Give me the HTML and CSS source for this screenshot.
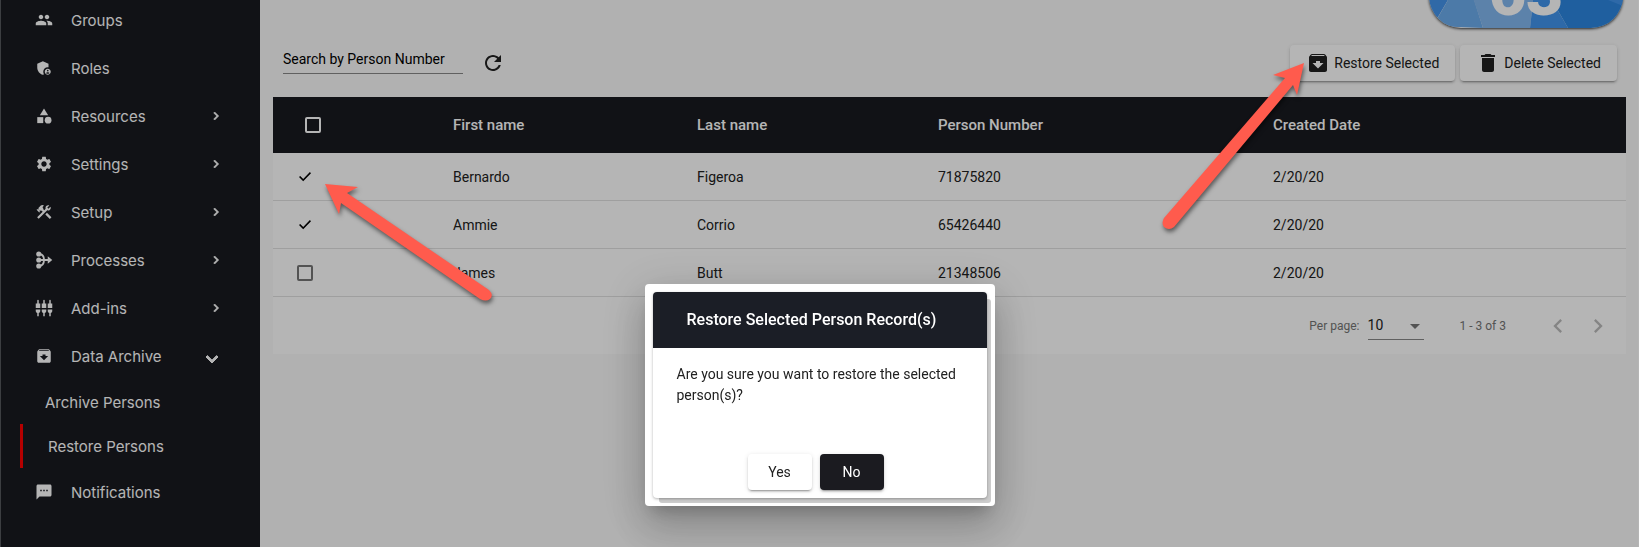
FILE: index.html
```html
<!DOCTYPE html>
<html lang="en">
<head>
    <meta charset="UTF-8">
    <meta name="viewport" content="width=device-width, initial-scale=1.0">
    <title>Restore Persons</title>
    <link rel="stylesheet" href="styles.css">
</head>
<body>
    <div class="layout">
        <!-- sidebar -->
        <nav class="sidebar">
            <ul class="menu">
                <li><a href="#groups" class="item">
                    <svg class="icon" viewBox="0 0 24 24"><path d="M16 11c1.660 0 2.990-1.340 2.990-3S17.660 5 16 5s-3 1.340-3 3 1.340 3 3 3zm-8 0c1.660 0 2.990-1.340 2.990-3S9.660 5 8 5 5 6.340 5 8s1.340 3 3 3zm0 2c-2.330 0-7 1.170-7 3.500V19h14v-2.500C15 14.170 10.330 13 8 13zm8 0c-.29 0-.62.02-.97.05 1.160.84 1.970 1.970 1.970 3.450V19h6v-2.500c0-2.330-4.670-3.500-7-3.500z"/></svg>
                    <span>Groups</span>
                </a></li>
                <li><a href="#roles" class="item">
                    <svg class="icon" viewBox="0 0 24 24"><path d="M17 11c.34 0 .67.04 1 .09V6.270L10.500 3 3 6.270v4.910c0 4.540 3.200 8.790 7.500 9.820.55-.13 1.080-.32 1.600-.55-.69-.98-1.100-2.170-1.100-3.450 0-3.310 2.690-6 6-6z"/><path d="M17 13c-2.210 0-4 1.790-4 4s1.790 4 4 4 4-1.790 4-4-1.790-4-4-4zm0 1.380c.62 0 1.120.51 1.120 1.120s-.51 1.120-1.120 1.120-1.120-.51-1.120-1.120.5-1.120 1.120-1.120zm0 5.370c-.93 0-1.740-.46-2.240-1.170.05-.72 1.510-1.080 2.240-1.080s2.190.36 2.240 1.080c-.5.71-1.310 1.170-2.240 1.170z"/></svg>
                    <span>Roles</span>
                </a></li>
                <li><a href="#resources" class="item">
                    <svg class="icon" viewBox="0 0 24 24"><path d="M12 2l-5.500 9h11z"/><circle cx="17.500" cy="17.500" r="4.500"/><path d="M3 13.500h8v8H3z"/></svg>
                    <span>Resources</span>
                    <svg class="chevron" viewBox="0 0 24 24"><path d="M10 6L8.590 7.410 13.170 12l-4.580 4.590L10 18l6-6z"/></svg>
                </a></li>
                <li><a href="#settings" class="item">
                    <svg class="icon" viewBox="0 0 24 24"><path d="M19.140 12.940c.04-.3.06-.61.06-.94 0-.32-.02-.64-.07-.94l2.030-1.580c.18-.14.23-.41.12-.61l-1.920-3.320c-.12-.22-.37-.29-.59-.22l-2.390.96c-.5-.38-1.030-.7-1.620-.94l-.36-2.540c-.04-.24-.24-.41-.48-.41h-3.840c-.24 0-.43.17-.47.41l-.36 2.540c-.59.24-1.130.57-1.620.94l-2.390-.96c-.22-.08-.47 0-.59.22L2.740 8.870c-.12.21-.08.47.12.61l2.030 1.580c-.05.3-.09.63-.09.94s.02.64.07.94l-2.030 1.580c-.18.14-.23.41-.12.61l1.920 3.320c.12.22.37.29.59.22l2.390-.96c.5.38 1.030.7 1.620.94l.36 2.540c.05.24.24.41.48.41h3.840c.24 0 .44-.17.47-.41l.36-2.540c.59-.24 1.130-.56 1.620-.94l2.390.96c.22.08.47 0 .59-.22l1.920-3.320c.12-.22.07-.47-.12-.61l-2.010-1.580zM12 15.600c-1.980 0-3.600-1.620-3.600-3.600s1.620-3.600 3.600-3.600 3.600 1.620 3.600 3.600-1.620 3.600-3.600 3.600z"/></svg>
                    <span>Settings</span>
                    <svg class="chevron" viewBox="0 0 24 24"><path d="M10 6L8.590 7.410 13.170 12l-4.580 4.590L10 18l6-6z"/></svg>
                </a></li>
                <li><a href="#setup" class="item">
                    <svg class="icon" viewBox="0 0 24 24"><path d="M13.783 15.172l2.121-2.121 5.996 5.996-2.121 2.121z"/><path d="M17.500 10c1.930 0 3.500-1.570 3.500-3.500 0-.58-.16-1.120-.41-1.600l-2.700 2.700-1.490-1.490 2.700-2.700c-.48-.25-1.020-.41-1.600-.41C15.570 3 14 4.570 14 6.500c0 .41.08.8.21 1.160l-1.850 1.850-1.780-1.780.71-.71-1.410-1.410L12 3.490c-1.170-1.170-3.070-1.170-4.240 0L4.220 7.030l1.410 1.410H2.810l-.71.71 3.540 3.540.71-.71V9.150l1.410 1.410.71-.71 1.780 1.780-7.410 7.410 2.120 2.120L16.340 9.790c.36.13.75.21 1.160.21z"/></svg>
                    <span>Setup</span>
                    <svg class="chevron" viewBox="0 0 24 24"><path d="M10 6L8.590 7.410 13.170 12l-4.580 4.590L10 18l6-6z"/></svg>
                </a></li>
                <li><a href="#processes" class="item">
                    <svg class="icon" viewBox="0 0 24 24"><circle cx="5" cy="4" r="3.400"/><circle cx="5" cy="12" r="3.400"/><circle cx="5" cy="20" r="3.400"/><path d="M5 4c5 0 7 4 7 8s-2 8-7 8M5 12h14" fill="none" stroke="currentColor" stroke-width="2.400"/><path d="M17 7l6 5-6 5z"/></svg>
                    <span>Processes</span>
                    <svg class="chevron" viewBox="0 0 24 24"><path d="M10 6L8.590 7.410 13.170 12l-4.580 4.590L10 18l6-6z"/></svg>
                </a></li>
                <li><a href="#addins" class="item">
                    <svg class="icon" viewBox="0 0 24 24"><path d="M5 2c0-.55-.45-1-1-1s-1 .45-1 1v4H1v6h6V6H5V2zm4 14c0 1.300.84 2.400 2 2.820V23h2v-4.180c1.160-.41 2-1.510 2-2.820v-2H9v2zm-8 0c0 1.300.84 2.400 2 2.820V23h2v-4.180C6.160 18.400 7 17.300 7 16v-2H1v2zM21 6V2c0-.55-.45-1-1-1s-1 .45-1 1v4h-2v6h6V6h-2zm-8-4c0-.55-.45-1-1-1s-1 .45-1 1v4H9v6h6V6h-2V2zm4 14c0 1.300.84 2.400 2 2.820V23h2v-4.180c1.160-.41 2-1.510 2-2.820v-2h-6v2z"/></svg>
                    <span>Add-ins</span>
                    <svg class="chevron" viewBox="0 0 24 24"><path d="M10 6L8.590 7.410 13.170 12l-4.580 4.590L10 18l6-6z"/></svg>
                </a></li>
                <li>
                    <a href="#archive" class="item open">
                        <svg class="icon" viewBox="0 0 24 24"><path d="M20.540 5.230l-1.390-1.680C18.880 3.210 18.470 3 18 3H6c-.47 0-.88.21-1.160.55L3.460 5.230C3.170 5.570 3 6.020 3 6.500V19c0 1.100.9 2 2 2h14c1.100 0 2-.9 2-2V6.500c0-.48-.17-.93-.46-1.270zM12 17.500L6.500 12H10v-2h4v2h3.500L12 17.500zM5.120 5l.81-1h12l.94 1H5.120z"/></svg>
                        <span>Data Archive</span>
                        <svg class="chevron" viewBox="0 0 24 24"><path d="M7.410 8.590L12 13.170l4.590-4.580L18 10l-6 6-6-6z"/></svg>
                    </a>
                    <ul class="submenu">
                        <li><a href="#archive-persons">Archive Persons</a></li>
                        <li><a href="#restore-persons" class="active">Restore Persons</a></li>
                    </ul>
                </li>
                <li><a href="#notifications" class="item">
                    <svg class="icon" viewBox="0 0 24 24"><path d="M20 2H4c-1.100 0-1.990.9-1.990 2L2 22l4-4h14c1.100 0 2-.9 2-2V4c0-1.100-.9-2-2-2zM9 11H7V9h2v2zm4 0h-2V9h2v2zm4 0h-2V9h2v2z"/></svg>
                    <span>Notifications</span>
                </a></li>
            </ul>
        </nav>

        <!-- content -->
        <main class="content">
            <header class="top">
                <div class="badge">
                    <svg class="facets" viewBox="0 0 194 64" preserveAspectRatio="none">
                        <path d="M0 0h40L9 53l-9 5z" fill="#4494ec"/>
                        <path d="M4 62L34 10l10 22 10 32z" fill="#6caced"/>
                        <path d="M36 10L60 0h48l-7 64H54z" fill="#82b7f0"/>
                        <path d="M108 0l20 45 11 19h-38z" fill="#4295ed"/>
                        <path d="M108 0h86v64h-55l-11-19z" fill="#2c86e1"/>
                        <path d="M194 42l-40-16V0h40z" fill="#4295ed"/>
                    </svg>
                    <span>63</span>
                </div>
            </header>

            <div class="toolbar">
                <input class="search" type="text" placeholder="Search by Person Number" aria-label="Search by Person Number">
                <button class="refresh" type="button" aria-label="Refresh">
                    <svg viewBox="0 0 24 24"><path d="M17.650 6.350C16.200 4.900 14.210 4 12 4c-4.420 0-7.990 3.580-7.990 8s3.570 8 7.990 8c3.730 0 6.840-2.550 7.730-6h-2.080c-.82 2.330-3.040 4-5.650 4-3.310 0-6-2.690-6-6s2.690-6 6-6c1.660 0 3.140.69 4.220 1.780L13 11h7V4l-2.350 2.350z"/></svg>
                </button>
                <div class="actions">
                    <button class="btn" type="button">
                        <svg viewBox="0 0 24 24"><path d="M20.540 5.230l-1.390-1.680C18.880 3.210 18.470 3 18 3H6c-.47 0-.88.21-1.160.55L3.460 5.230C3.170 5.570 3 6.020 3 6.500V19c0 1.100.9 2 2 2h14c1.100 0 2-.9 2-2V6.500c0-.48-.17-.93-.46-1.270zM12 17.500L6.500 12H10v-2h4v2h3.500L12 17.500zM5.120 5l.81-1h12l.94 1H5.120z"/></svg>
                        Restore Selected
                    </button>
                    <button class="btn" type="button">
                        <svg viewBox="0 0 24 24"><path d="M6 19c0 1.100.9 2 2 2h8c1.100 0 2-.9 2-2V7H6v12zM19 4h-3.500l-1-1h-5l-1 1H5v2h14V4z"/></svg>
                        Delete Selected
                    </button>
                </div>
            </div>

            <div class="card">
                <table>
                    <thead>
                        <tr>
                            <th class="check"><input type="checkbox" aria-label="Select all"></th>
                            <th class="first">First name</th>
                            <th class="last">Last name</th>
                            <th class="number">Person Number</th>
                            <th>Created Date</th>
                        </tr>
                    </thead>
                    <tbody>
                        <tr>
                            <td class="check"><input type="checkbox" aria-label="Bernardo Figeroa" checked></td>
                            <td>Bernardo</td>
                            <td>Figeroa</td>
                            <td>71875820</td>
                            <td>2/20/20</td>
                        </tr>
                        <tr>
                            <td class="check"><input type="checkbox" aria-label="Ammie Corrio" checked></td>
                            <td>Ammie</td>
                            <td>Corrio</td>
                            <td>65426440</td>
                            <td>2/20/20</td>
                        </tr>
                        <tr>
                            <td class="check"><input type="checkbox" aria-label="James Butt"></td>
                            <td>James</td>
                            <td>Butt</td>
                            <td>21348506</td>
                            <td>2/20/20</td>
                        </tr>
                    </tbody>
                </table>
                <div class="pager">
                    <label for="perPage">Per page:</label>
                    <div class="select">
                        <select id="perPage">
                            <option>10</option>
                            <option>25</option>
                            <option>50</option>
                        </select>
                    </div>
                    <span class="range">1 - 3 of 3</span>
                    <button type="button" aria-label="Previous page" disabled>
                        <svg viewBox="0 0 24 24"><path d="M15.410 7.410L14 6l-6 6 6 6 1.410-1.410L10.830 12z"/></svg>
                    </button>
                    <button type="button" aria-label="Next page" disabled>
                        <svg viewBox="0 0 24 24"><path d="M10 6L8.590 7.410 13.170 12l-4.580 4.590L10 18l6-6z"/></svg>
                    </button>
                </div>
            </div>
        </main>
    </div>

    <!-- dialog -->
    <div class="backdrop">
        <div class="dialog" role="dialog" aria-labelledby="dialogTitle">
            <div class="panel">
                <h2 id="dialogTitle">Restore Selected Person Record(s)</h2>
                <p>Are you sure you want to restore the selected person(s)?</p>
                <div class="choices">
                    <button class="btn" type="button">Yes</button>
                    <button class="btn dark" type="button">No</button>
                </div>
            </div>
        </div>
    </div>

    <!-- arrows -->
    <svg class="arrow to-row" viewBox="0 0 180 130">
        <path d="M5 4L38 7L27 13L169 110Q174 115 170 119Q166 122 160 119L21 23L19 34Z"/>
    </svg>
    <svg class="arrow to-button" viewBox="0 0 160 180">
        <path d="M144 8L137 40L133 30L14 172Q9 176 4 172Q1 168 4 163L125 23L113 20Z"/>
    </svg>
</body>
</html>
```
FILE: styles.css
```css
* {
    margin: 0;
    padding: 0;
    box-sizing: border-box;
}
body {
    font-family: Roboto, "Liberation Sans", sans-serif;
    font-size: 14px;
    color: #212121;
    background-color: #fafafa;
    overflow: hidden;
}
ul, li {
    list-style: none;
}
a {
    color: inherit;
    text-decoration: none;
}
button, input, select {
    font: inherit;
    color: inherit;
    border: none;
    background: none;
}
svg {
    display: block;
    fill: currentColor;
}
.layout {
    display: flex;
    min-height: 100vh;
}

/* sidebar */
.sidebar {
    width: 260px;
    flex: none;
    background-color: #181a20;
    border-left: 1px solid #55585c;
    color: #fff;
    font-family: Inter, Roboto, sans-serif;
    font-size: 15px;
}
.menu {
    margin-top: -4px;
}
.item {
    display: flex;
    align-items: center;
    height: 48px;
    padding: 0 36px 0 34px;
}
.item .icon {
    width: 18px;
    height: 18px;
    margin-right: 18px;
}
.item .chevron {
    width: 16px;
    height: 16px;
    margin-left: auto;
    stroke: currentColor;
}
.item.open .chevron {
    width: 24px;
    height: 24px;
    margin-top: 6px;
}
.submenu a {
    display: flex;
    align-items: center;
    height: 44px;
    padding-left: 25px;
    margin-left: 19px;
}
.submenu a.active {
    border-left: 3px solid #f00;
}

/* content */
.content {
    flex: 1;
    padding: 0 12px 0 13px;
    border-right: 1px solid #fff;
}
.top {
    display: flex;
    justify-content: flex-end;
    align-items: flex-end;
    height: 32px;
    padding: 0 3px 4px 0;
    overflow: hidden;
}
.badge {
    position: relative;
    flex: none;
    width: 194px;
    height: 64px;
    border-radius: 32px;
    text-align: center;
    color: #fff;
    box-shadow: 0 1px 3px rgba(0, 0, 0, .8);
}
.badge .facets {
    width: 100%;
    height: 100%;
    border-radius: 32px;
}
.badge span {
    position: absolute;
    left: 0;
    right: 0;
    bottom: 0;
    font-size: 64px;
    line-height: 68px;
    font-weight: 900;
}
.toolbar {
    display: flex;
    align-items: center;
    height: 61px;
    margin-bottom: 4px;
    padding: 0 9px 0 10px;
}
.search {
    width: 180px;
    height: 28px;
    margin-bottom: 6px;
    border-bottom: 1px solid #888;
}
.search::placeholder {
    color: #000;
    opacity: 1;
}
.refresh {
    margin-left: 18px;
}
.refresh svg {
    width: 24px;
    height: 24px;
}
.actions {
    display: flex;
    gap: 5px;
    margin-left: auto;
}
.btn {
    display: flex;
    align-items: center;
    justify-content: center;
    gap: 4px;
    height: 36px;
    padding: 0 16px;
    border-radius: 4px;
    background-color: #fff;
    box-shadow: 0 3px 1px -2px rgba(0, 0, 0, .2), 0 2px 2px 0 rgba(0, 0, 0, .14), 0 1px 5px 0 rgba(0, 0, 0, .12);
}
.btn svg {
    width: 24px;
    height: 24px;
}

/* table */
.card {
    background-color: #fff;
}
table {
    width: 100%;
    table-layout: fixed;
    border-collapse: separate;
    border-spacing: 0;
}
th, td {
    height: 48px;
    text-align: left;
    border-bottom: 1px solid #e0e0e0;
}
th {
    height: 56px;
    font-size: 15px;
    font-weight: 500;
    color: #fff;
    background-color: #181a20;
    border-bottom: none;
}
.check {
    width: 180px;
    padding-left: 24px;
}
th.check {
    padding-left: 32px;
}
.first {
    width: 244px;
}
.last {
    width: 241px;
}
.number {
    width: 335px;
}
input[type="checkbox"] {
    appearance: none;
    display: block;
    width: 16px;
    height: 16px;
    border: 2px solid #757575;
    border-radius: 2px;
}
th input[type="checkbox"] {
    border-color: #fff;
}
input[type="checkbox"]:checked {
    border-color: transparent;
}
input[type="checkbox"]:checked::before {
    content: "";
    display: block;
    width: 12px;
    height: 12px;
    background-color: #000;
    clip-path: polygon(0 55%, 10% 45%, 35% 70%, 91% 12%, 100% 22%, 35% 89%);
}
.pager {
    display: flex;
    align-items: center;
    height: 57px;
    padding-right: 8px;
    font-size: 12px;
    color: #757575;
}
.pager label {
    margin-left: auto;
}
.pager .select {
    position: relative;
    margin-left: 8px;
}
.pager .select::after {
    content: "";
    position: absolute;
    right: 4px;
    top: 12px;
    border: 5px solid transparent;
    border-top-color: #757575;
    pointer-events: none;
}
.pager select {
    width: 56px;
    height: 28px;
    appearance: none;
    border-bottom: 1px solid #888;
    font-size: 14px;
    color: #212121;
}
.pager .range {
    margin: 0 32px 0 36px;
}
.pager button {
    color: #bbb;
}
.pager button svg {
    width: 40px;
    height: 28px;
}

/* dialog */
.backdrop {
    position: fixed;
    inset: 0;
    display: flex;
    justify-content: center;
    background-color: rgba(0, 0, 0, .29);
}
.dialog {
    align-self: flex-start;
    width: 350px;
    margin-top: 284px;
    padding: 8px;
    border-radius: 4px;
    background-color: #fff;
    box-shadow: 0 11px 15px -7px rgba(0, 0, 0, .2), 0 24px 38px 3px rgba(0, 0, 0, .14), 0 9px 46px 8px rgba(0, 0, 0, .12);
}
.panel {
    border-radius: 4px;
    background-color: #fff;
    box-shadow: 5px 6px 0 -1px rgba(0, 0, 0, .2), 0 1px 3px rgba(0, 0, 0, .3);
}
.panel h2 {
    padding: 0 34px;
    border-radius: 4px 4px 0 0;
    font-size: 16px;
    line-height: 56px;
    font-weight: 500;
    color: #fff;
    background-color: #1b1e26;
}
.panel p {
    padding: 16px 24px 48px;
    line-height: 21px;
}
.choices {
    display: flex;
    justify-content: center;
    gap: 8px;
    padding: 0 8px 8px 0;
}
.choices .btn {
    width: 64px;
}
.btn.dark {
    color: #fff;
    background-color: #1b1b20;
}

/* arrows */
.arrow {
    position: absolute;
    fill: #ff5b4d;
    filter: drop-shadow(1px 3px 2px rgba(0, 0, 0, .5));
}
.to-row {
    left: 320px;
    top: 180px;
    width: 180px;
    height: 130px;
}
.to-button {
    left: 1160px;
    top: 55px;
    width: 160px;
    height: 180px;
}
```
